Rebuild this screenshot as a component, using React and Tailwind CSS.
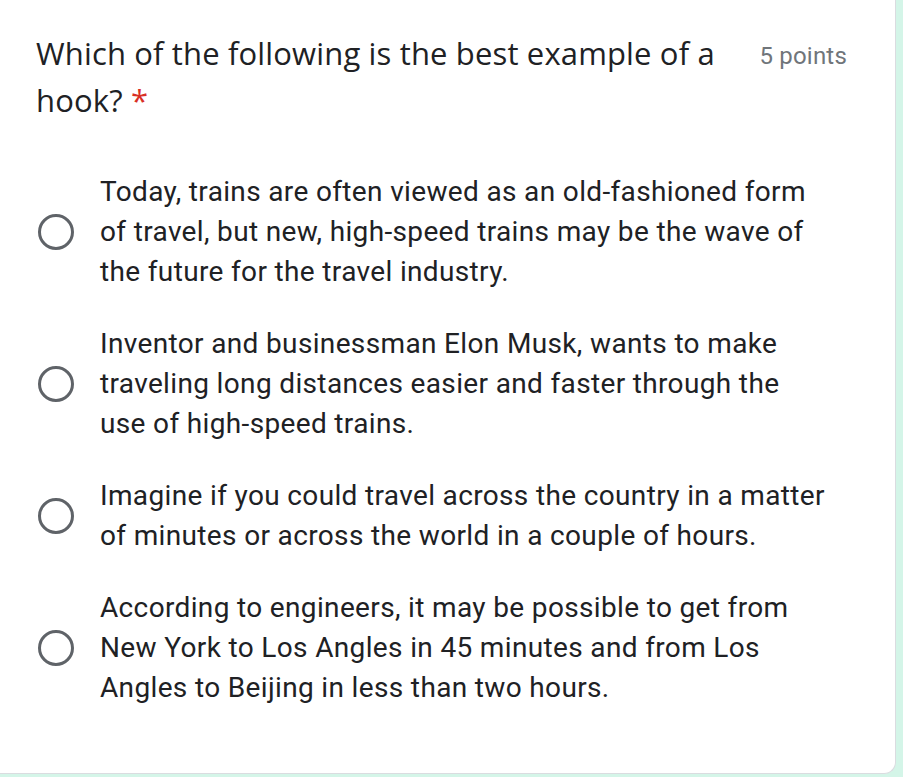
const options = [
  'Today, trains are often viewed as an old-fashioned form of travel, but new, high-speed trains may be the wave of the future for the travel industry.',
  'Inventor and businessman Elon Musk, wants to make traveling long distances easier and faster through the use of high-speed trains.',
  'Imagine if you could travel across the country in a matter of minutes or across the world in a couple of hours.',
  'According to engineers, it may be possible to get from New York to Los Angles in 45 minutes and from Los Angles to Beijing in less than two hours.',
];

export default function App() {
  return (
    <div className="w-[903px] h-[777px] bg-[#d4f5e8] overflow-hidden">
      <div className="w-[896px] h-[774px] bg-white border-r border-b border-[#dadce0] rounded-br-[12px] pl-[36px] pt-[30px]">
        {/* Question header */}
        <div className="flex justify-between items-start">
          <h2 className="w-[700px] text-[31px] leading-[47px] tracking-[0.15px] text-[#202124] font-['Open_Sans',sans-serif]">
            Which of the following is the best example of a hook? <span className="text-[#d93025]">*</span>
          </h2>
          <span className="mr-[48px] mt-[11px] text-[24px] leading-[30px] tracking-[0.2px] text-[#70757a] font-['Roboto',sans-serif]">
            5 points
          </span>
        </div>

        {/* Choices */}
        <div className="mt-[48px] flex flex-col gap-[32px]">
          {options.map((opt) => (
            <label key={opt} className="flex items-center">
              <span className="ml-[2px] w-[36px] h-[36px] shrink-0 rounded-full border-[3px] border-[#5f6368]" />
              <span className="ml-[26px] w-[732px] text-[28px] leading-[40px] tracking-[0.35px] text-[#202124] font-['Roboto',sans-serif]">
                {opt}
              </span>
            </label>
          ))}
        </div>
      </div>
    </div>
  );
}
